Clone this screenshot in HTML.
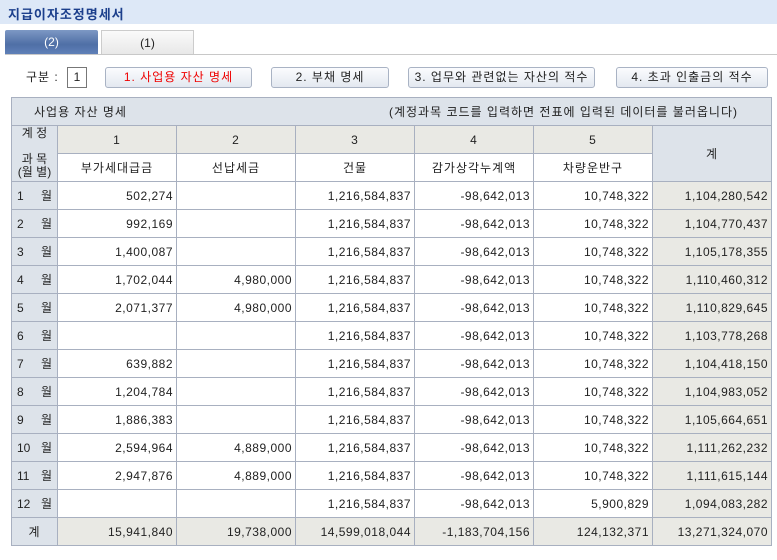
<!DOCTYPE html>
<html><head><meta charset="utf-8"><style>
*{margin:0;padding:0;box-sizing:border-box}
body{width:777px;height:560px;background:#fff;font-family:"Liberation Sans","Noto Sans CJK KR",sans-serif;font-size:12px;color:#222;position:relative;overflow:hidden}
.title{position:absolute;left:0;top:0;width:777px;height:24px;background:#dde8f7;color:#1c3f8c;font-weight:bold;font-size:13px;padding:4px 0 0 8px;letter-spacing:1px}
.tab{position:absolute;top:30px;height:24px;width:93px;text-align:center;line-height:24px;font-size:12px}
.t1{left:5px;background:linear-gradient(#7d98c4,#4f6fa6 60%,#5f80b8);color:#fff;border-radius:2px 2px 0 0}
.t2{left:101px;background:linear-gradient(#fafafa,#e8e8e8);border:1px solid #ccc;border-bottom:none}
.tline{position:absolute;left:5px;top:54px;width:772px;height:1px;background:#c8c8c8}
.lbl{position:absolute;left:26px;top:68px;letter-spacing:1px}
.box{position:absolute;left:67px;top:67px;width:20px;height:21px;border:1px solid #777;text-align:center;line-height:19px}
.btn{position:absolute;top:67px;height:21px;border:1px solid #a9b3c4;border-radius:3px;background:linear-gradient(#fbfcfe,#e3e8f0);text-align:center;line-height:19px;letter-spacing:1px}
table{position:absolute;left:11px;top:97px;border-collapse:collapse;width:760px;table-layout:fixed}
td{border:1px solid #a8b0c0;height:28px;padding:0 3px;white-space:nowrap}
.h{background:#dde3ea}
.g{background:#e9e9e4}
.r{text-align:right;letter-spacing:0.5px}
.c{text-align:center;letter-spacing:1px}
.m{background:#dde3ea;padding-left:5px}
.m i{font-style:normal;display:inline-block;width:24px}
</style></head><body>
<div class="title">지급이자조정명세서</div>
<div class="tab t1">(2)</div><div class="tab t2">(1)</div>
<div class="tline"></div>
<div class="lbl">구분 :</div><div class="box">1</div>
<div class="btn" style="left:105px;width:147px;color:#e00">1. 사업용 자산 명세</div>
<div class="btn" style="left:271px;width:118px">2. 부채 명세</div>
<div class="btn" style="left:408px;width:187px">3. 업무와 관련없는 자산의 적수</div>
<div class="btn" style="left:616px;width:152px">4. 초과 인출금의 적수</div>
<table>
<colgroup><col style="width:46px"><col style="width:119px"><col style="width:119px"><col style="width:119px"><col style="width:119px"><col style="width:119px"><col style="width:119px"></colgroup>
<tr><td class="h" colspan="7" style="padding-left:22px;letter-spacing:1px">사업용 자산 명세<span style="float:right;padding-right:30px">(계정과목 코드를 입력하면 전표에 입력된 데이터를 불러옵니다)</span></td></tr>
<tr><td class="h c" rowspan="2" style="vertical-align:top;line-height:13px;padding-top:1px;letter-spacing:0">계 정<br><br>과 목<br>(월 별)</td><td class="g c">1</td><td class="g c">2</td><td class="g c">3</td><td class="g c">4</td><td class="g c">5</td><td class="h c" rowspan="2">계</td></tr>
<tr><td class="c">부가세대급금</td><td class="c">선납세금</td><td class="c">건물</td><td class="c">감가상각누계액</td><td class="c">차량운반구</td></tr>
<tr><td class="m"><i>1</i>월</td><td class="r">502,274</td><td></td><td class="r">1,216,584,837</td><td class="r">-98,642,013</td><td class="r">10,748,322</td><td class="g r">1,104,280,542</td></tr>
<tr><td class="m"><i>2</i>월</td><td class="r">992,169</td><td></td><td class="r">1,216,584,837</td><td class="r">-98,642,013</td><td class="r">10,748,322</td><td class="g r">1,104,770,437</td></tr>
<tr><td class="m"><i>3</i>월</td><td class="r">1,400,087</td><td></td><td class="r">1,216,584,837</td><td class="r">-98,642,013</td><td class="r">10,748,322</td><td class="g r">1,105,178,355</td></tr>
<tr><td class="m"><i>4</i>월</td><td class="r">1,702,044</td><td class="r">4,980,000</td><td class="r">1,216,584,837</td><td class="r">-98,642,013</td><td class="r">10,748,322</td><td class="g r">1,110,460,312</td></tr>
<tr><td class="m"><i>5</i>월</td><td class="r">2,071,377</td><td class="r">4,980,000</td><td class="r">1,216,584,837</td><td class="r">-98,642,013</td><td class="r">10,748,322</td><td class="g r">1,110,829,645</td></tr>
<tr><td class="m"><i>6</i>월</td><td></td><td></td><td class="r">1,216,584,837</td><td class="r">-98,642,013</td><td class="r">10,748,322</td><td class="g r">1,103,778,268</td></tr>
<tr><td class="m"><i>7</i>월</td><td class="r">639,882</td><td></td><td class="r">1,216,584,837</td><td class="r">-98,642,013</td><td class="r">10,748,322</td><td class="g r">1,104,418,150</td></tr>
<tr><td class="m"><i>8</i>월</td><td class="r">1,204,784</td><td></td><td class="r">1,216,584,837</td><td class="r">-98,642,013</td><td class="r">10,748,322</td><td class="g r">1,104,983,052</td></tr>
<tr><td class="m"><i>9</i>월</td><td class="r">1,886,383</td><td></td><td class="r">1,216,584,837</td><td class="r">-98,642,013</td><td class="r">10,748,322</td><td class="g r">1,105,664,651</td></tr>
<tr><td class="m"><i>10</i>월</td><td class="r">2,594,964</td><td class="r">4,889,000</td><td class="r">1,216,584,837</td><td class="r">-98,642,013</td><td class="r">10,748,322</td><td class="g r">1,111,262,232</td></tr>
<tr><td class="m"><i>11</i>월</td><td class="r">2,947,876</td><td class="r">4,889,000</td><td class="r">1,216,584,837</td><td class="r">-98,642,013</td><td class="r">10,748,322</td><td class="g r">1,111,615,144</td></tr>
<tr><td class="m"><i>12</i>월</td><td></td><td></td><td class="r">1,216,584,837</td><td class="r">-98,642,013</td><td class="r">5,900,829</td><td class="g r">1,094,083,282</td></tr>
<tr><td class="h c">계</td><td class="g r">15,941,840</td><td class="g r">19,738,000</td><td class="g r">14,599,018,044</td><td class="g r">-1,183,704,156</td><td class="g r">124,132,371</td><td class="g r">13,271,324,070</td></tr>
</table>
</body></html>
